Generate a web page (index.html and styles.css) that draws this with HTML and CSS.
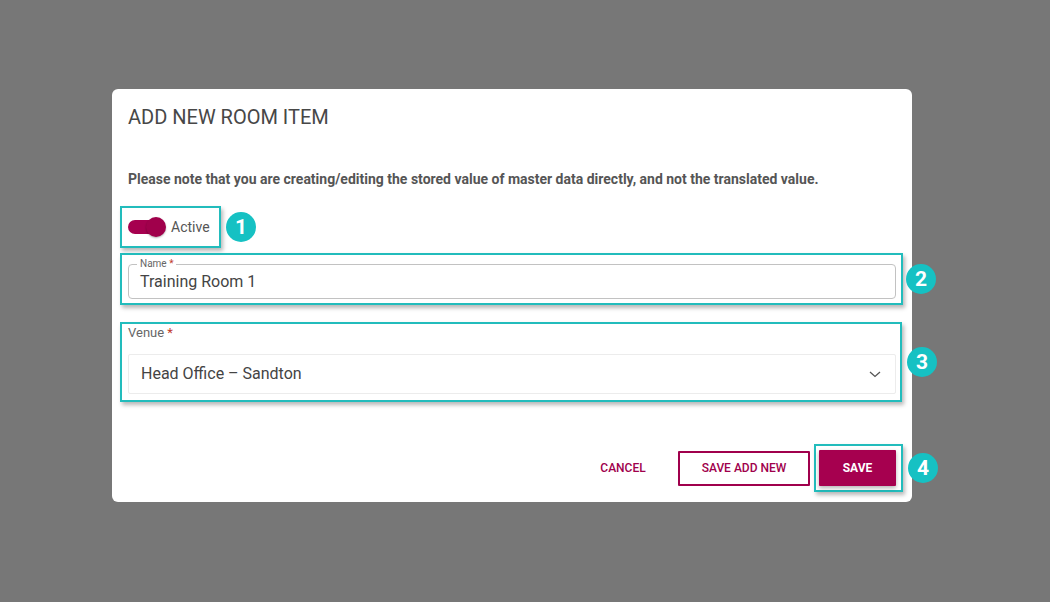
FILE: index.html
```html
<!DOCTYPE html>
<html lang="en">
<head>
<meta charset="utf-8">
<title>Add New Room Item</title>
<link rel="stylesheet" href="styles.css">
</head>
<body>
<div class="dialog">
  <h2 class="title">ADD NEW ROOM ITEM</h2>
  <p class="note">Please note that you are creating/editing the stored value of master data directly, and not the translated value.</p>

  <div class="hl hl-toggle">
    <span class="switch"><span class="thumb"></span></span>
    <span class="switch-label">Active</span>
    <span class="badge">1</span>
  </div>

  <div class="hl hl-name">
    <div class="field">
      <span class="field-label">Name <span class="req">*</span></span>
      <span class="field-value">Training Room 1</span>
    </div>
    <span class="badge badge-2">2</span>
  </div>

  <div class="hl hl-venue">
    <div class="venue-label">Venue <span class="req">*</span></div>
    <div class="select">
      <span class="select-value">Head Office – Sandton</span>
      <svg class="chev" width="12" height="7" viewBox="0 0 12 7"><path d="M1 1 L6 5.5 L11 1" fill="none" stroke="#555" stroke-width="1.3"/></svg>
    </div>
    <span class="badge">3</span>
  </div>

  <div class="actions">
    <button class="btn btn-text">CANCEL</button>
    <button class="btn btn-outline">SAVE ADD NEW</button>
    <div class="hl hl-save">
      <button class="btn btn-fill">SAVE</button>
      <span class="badge">4</span>
    </div>
  </div>
</div>
</body>
</html>
```

FILE: styles.css
```css
* { box-sizing: border-box; }
html, body { margin: 0; padding: 0; }
body {
  width: 1050px;
  height: 602px;
  background: #777777;
  font-family: Roboto, "Noto Sans", Arial, sans-serif;
  padding: 89px 0 0 112px;
  overflow: hidden;
}
.dialog {
  width: 800px;
  height: 413px;
  background: #ffffff;
  border-radius: 6px;
  padding: 16px 16px 10px 16px;
}
.title {
  margin: 0;
  font-size: 20px;
  line-height: 24px;
  font-weight: 400;
  color: #474747;
}
.note {
  margin: 42px 0 0 0;
  font-size: 14px;
  line-height: 16px;
  font-weight: 700;
  color: #555555;
}
.hl {
  position: relative;
  border: 2px solid #22bcbc;
  box-shadow: 2px 3px 4px rgba(0, 0, 0, 0.28);
}
.badge {
  position: absolute;
  left: calc(100% + 7px);
  top: 50%;
  transform: translateY(-50%);
  width: 30px;
  height: 30px;
  border-radius: 50%;
  background: #16c1c3;
  color: #ffffff;
  font-weight: 700;
  font-size: 21px;
  line-height: 30px;
  text-align: center;
}
.badge-2 { left: calc(100% + 5px); }
.hl-toggle {
  margin: 19px 0 0 -8px;
  width: 101px;
  height: 42px;
  display: flex;
  align-items: center;
  padding: 0 6px;
}
.switch {
  position: relative;
  width: 36px;
  height: 14px;
  border-radius: 7px;
  background: #a6004f;
  flex: none;
}
.thumb {
  position: absolute;
  right: -2px;
  top: -3px;
  width: 20px;
  height: 20px;
  border-radius: 50%;
  background: #a0004b;
  box-shadow: 0 1px 2px rgba(0, 0, 0, 0.3);
}
.switch-label {
  margin-left: 7px;
  font-size: 14px;
  color: #555555;
}
.hl-name {
  margin: 5px -7px 0 -8px;
  height: 52px;
  padding: 9px 5px 4px 6px;
}
.field {
  position: relative;
  height: 35px;
  border: 1px solid #c2c2c2;
  border-radius: 4px;
  padding-left: 11px;
  display: flex;
  align-items: center;
}
.field-label {
  position: absolute;
  top: -7px;
  left: 8px;
  padding: 0 3px;
  background: #ffffff;
  font-size: 10px;
  line-height: 12px;
  color: #666666;
}
.req { color: #c0392b; }
.field-value {
  font-size: 16px;
  color: #444444;
}
.hl-venue {
  margin: 17px -6px 0 -8px;
  height: 80px;
  padding: 1px 4px 6px 6px;
}
.venue-label {
  font-size: 13px;
  line-height: 16px;
  color: #666666;
}
.select {
  margin-top: 13px;
  height: 40px;
  border: 1px solid #ececec;
  border-radius: 2px;
  display: flex;
  align-items: center;
  justify-content: space-between;
  padding: 0 14px 0 12px;
}
.select-value {
  font-size: 16px;
  color: #444444;
  margin-top: -1px;
}
.chev { margin-top: 1px; }
.actions {
  margin: 42px -7px 0 0;
  display: flex;
  justify-content: flex-end;
  align-items: center;
}
.btn {
  font-family: Roboto, "Noto Sans", Arial, sans-serif;
  font-size: 12px;
  font-weight: 500;
  cursor: pointer;
  border-radius: 1px;
}
.btn-text {
  width: 78px;
  height: 35px;
  background: transparent;
  border: none;
  color: #a0004c;
  margin-right: 16px;
}
.btn-outline {
  width: 132px;
  height: 35px;
  background: #ffffff;
  border: 2px solid #a0004c;
  color: #a0004c;
  margin-right: 4px;
}
.hl-save {
  padding: 4px 5px 4px 3px;
}
.btn-fill {
  display: block;
  width: 77px;
  height: 36px;
  background: #a6004f;
  border: none;
  color: #ffffff;
  font-weight: 700;
  box-shadow: 0 2px 4px rgba(0, 0, 0, 0.3);
}
```
